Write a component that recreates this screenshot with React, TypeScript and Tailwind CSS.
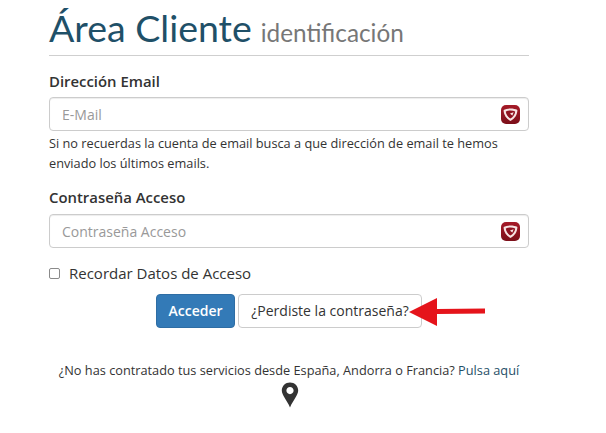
function Badge() {
  return (
    <span className="absolute right-[9px] top-[8px] flex h-[19px] w-[19px] items-center justify-center rounded-[5px] bg-gradient-to-b from-[#a51a28] to-[#7c0f1a]">
      <svg width="17" height="17" viewBox="0 0 17 17">
        <path d="M1.6 4C5 2 12 2 15.4 4C15.4 8.6 12.6 12.8 8.5 15C4.4 12.8 1.6 8.6 1.6 4Z" fill="#f7e4e4" />
        <path d="M3.8 5.4C6.4 4.2 10.6 4.2 13.2 5.4C13 8.2 11 11 8.5 12.6C6 11 4 8.2 3.8 5.4Z" fill="#8f1220" />
        <path d="M8 7.4L11.6 6.2L10.4 9.4L9 8.6Z" fill="#f7e4e4" />
      </svg>
    </span>
  );
}

function Field({ placeholder }: { placeholder: string }) {
  return (
    <div className="relative h-[34px] w-full">
      <input
        readOnly
        placeholder={placeholder}
        className="h-full w-full rounded-[4px] border border-[#cccccc] bg-white px-[12px] text-[14px] text-[#555] shadow-[inset_0_1px_1px_rgba(0,0,0,0.075)] outline-none placeholder:text-[#999]"
      />
      <Badge />
    </div>
  );
}

export default function App() {
  return (
    <div className="h-[433px] w-[606px] overflow-hidden bg-white pl-[49px] font-['Open_Sans',sans-serif] text-[#333]">
      <div className="w-[480px]">
        <div className="flex h-[56px] items-baseline gap-[9px] border-b border-[#cfcfcf] pt-[4px]">
          <span className="font-['Lato',sans-serif] text-[37.5px] leading-[48px] text-[#1f5068]">Área Cliente</span>
          <span className="font-['Lato',sans-serif] text-[24.3px] leading-[48px] text-[#777]">identificación</span>
        </div>
        <div className="mt-[15px] text-[14.9px] font-semibold leading-[20px]">Dirección Email</div>
        <div className="mt-[6px]"><Field placeholder="E-Mail" /></div>
        <p className="mt-[2px] text-[12.75px] leading-[20px]">
          Si no recuerdas la cuenta de email busca a que dirección de email te hemos<br />
          enviado los últimos emails.
        </p>
        <div className="mt-[14px] text-[14.9px] font-semibold leading-[20px]">Contraseña Acceso</div>
        <div className="mt-[7px]"><Field placeholder="Contraseña Acceso" /></div>
        <label className="mt-[15px] flex h-[20px] items-center gap-[9px] text-[15px]">
          <input type="checkbox" readOnly className="h-[11px] w-[11px] appearance-none rounded-[2px] border border-[#8a8a8a] bg-white" />
          Recordar Datos de Acceso
        </label>
        <div className="relative mt-[11px] flex gap-[3px] pl-[107px]">
          <button className="h-[34px] w-[79px] rounded-[4px] border border-[#2e6da4] bg-[#337ab7] pb-[2px] text-[14px] font-semibold text-white">Acceder</button>
          <button className="h-[34px] w-[184px] rounded-[4px] border border-[#cccccc] bg-white pb-[2px] text-[14px] text-[#333]">¿Perdiste la contraseña?</button>
          <svg className="absolute left-[360px] top-[2px]" width="80" height="32" viewBox="0 0 80 32">
            <path d="M0 16L28 2V13L76 12.5V17.5L28 18V30Z" fill="#e5141b" />
          </svg>
        </div>
        <p className="mt-[32px] text-center text-[12.75px] leading-[20px]">
          ¿No has contratado tus servicios desde España, Andorra o Francia? <span className="text-[#1f5068]">Pulsa aquí</span>
        </p>
        <div className="mt-[2px] flex justify-center pl-[1px]">
          <svg width="18" height="26" viewBox="0 0 18 26">
            <path fillRule="evenodd" d="M9 0.5C13.6 0.5 17.2 4 17.2 8.6C17.2 13 12 18.5 9 25.5C6 18.5 0.8 13 0.8 8.6C0.8 4 4.4 0.5 9 0.5ZM9 5C7 5 5.4 6.6 5.4 8.6C5.4 10.6 7 12.2 9 12.2C11 12.2 12.6 10.6 12.6 8.6C12.6 6.6 11 5 9 5Z" fill="#333" />
          </svg>
        </div>
      </div>
    </div>
  );
}
